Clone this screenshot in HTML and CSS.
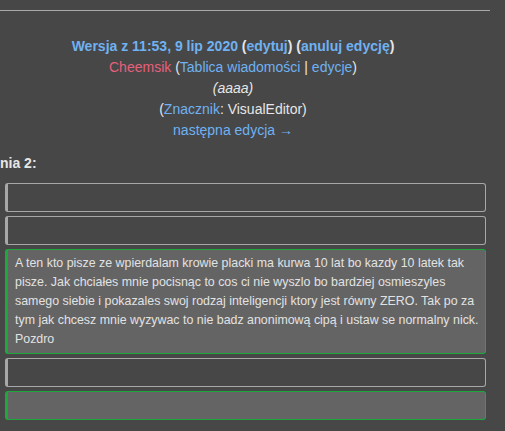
FILE: index.html
```html
<!DOCTYPE html>
<html lang="pl">
<head>
<meta charset="utf-8">
<link rel="stylesheet" href="styles.css">
</head>
<body>
<div class="page">
  <div class="rule"></div>
  <div class="header">
    <div class="line bold"><a class="link">Wersja z 11:53, 9 lip 2020</a> (<a class="link">edytuj</a>) (<a class="link">anuluj edycję</a>)</div>
    <div class="line"><a class="new">Cheemsik</a> (<a class="link">Tablica wiadomości</a> | <a class="link">edycje</a>)</div>
    <div class="line italic">(aaaa)</div>
    <div class="line">(<a class="link">Znacznik</a>: VisualEditor)</div>
    <div class="line"><a class="link">następna edycja →</a></div>
  </div>
  <div class="lineno">nia 2:</div>
  <div class="diff">
    <div class="box ctx"></div>
    <div class="box ctx"></div>
    <div class="box add">A ten kto pisze ze wpierdalam krowie placki ma kurwa 10 lat bo kazdy 10 latek tak pisze. Jak chciałes mnie pocisnąc to cos ci nie wyszlo bo bardziej osmieszyles samego siebie i pokazales swoj rodzaj inteligencji ktory jest równy ZERO. Tak po za tym jak chcesz mnie wyzywac to nie badz anonimową cipą i ustaw se normalny nick. Pozdro</div>
    <div class="box ctx"></div>
    <div class="box add"></div>
  </div>
</div>
</body>
</html>
```
FILE: styles.css
```css
html, body {
  margin: 0;
  padding: 0;
  background: #474747;
}
body {
  font-family: "Liberation Sans", Arial, sans-serif;
  color: #e6e6e6;
  font-size: 14px;
}
.page {
  width: 490px;
  padding-top: 10px;
}
.rule {
  height: 1px;
  background: #a9a9a9;
}
.header {
  width: 466px;
  margin-top: 25px;
  text-align: center;
  line-height: 21px;
}
.bold { font-weight: bold; }
.italic { font-style: italic; }
.link { color: #6fb2f2; text-decoration: none; }
.new { color: #e5607d; }
.lineno {
  margin-top: 12px;
  font-weight: bold;
  line-height: 21px;
}
.diff {
  margin-top: 9px;
  margin-left: 5px;
  width: 481px;
  display: flex;
  flex-direction: column;
  gap: 4px;
}
.box {
  box-sizing: border-box;
  min-height: 29px;
  border: 1px solid #a8a8a8;
  border-left-width: 3px;
  border-radius: 3px;
  padding: 4px 3px 4px 7px;
  font-size: 12.4px;
  line-height: 19px;
  color: #e2e2e2;
}
.ctx {
  background: #474747;
  border-color: #a8a8a8;
}
.add {
  background: #646464;
  border-color: #1ca83c;
}
```
